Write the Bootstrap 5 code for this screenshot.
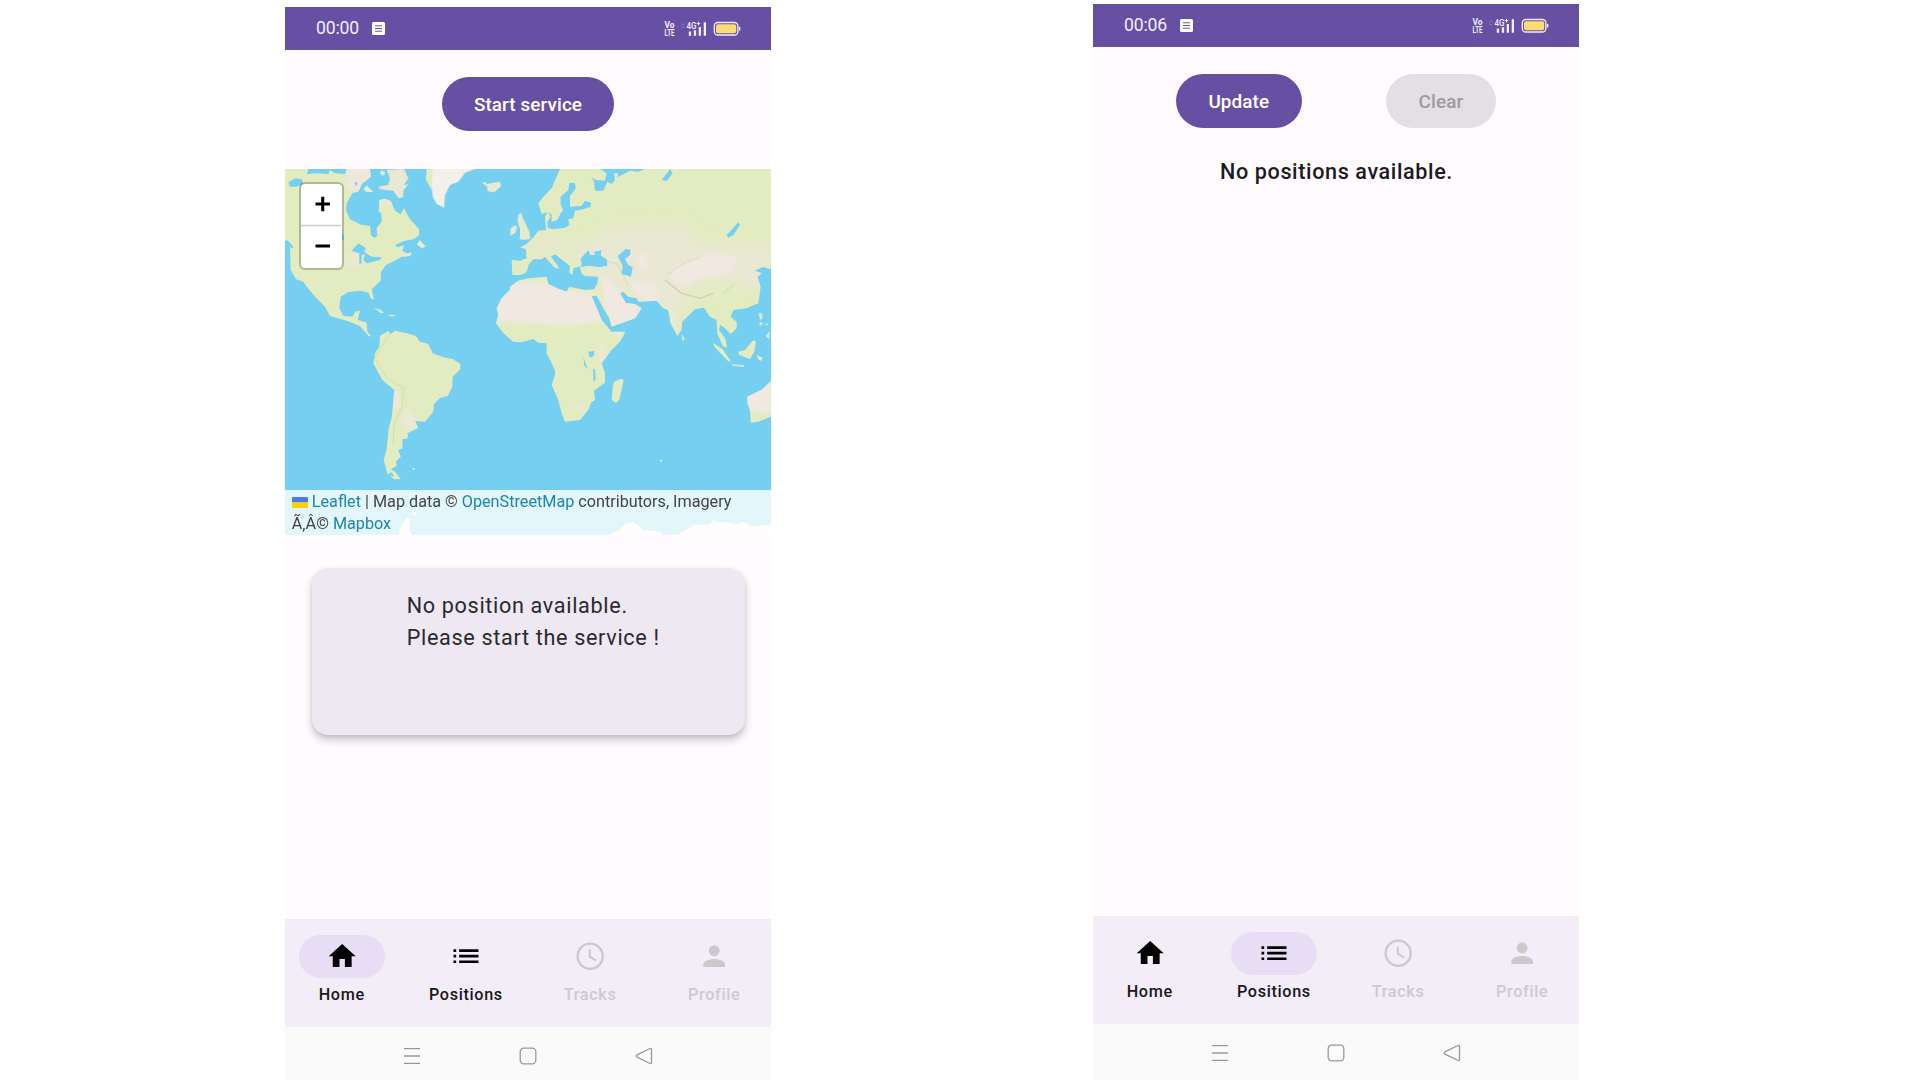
<!DOCTYPE html>
<html lang="en">
<head>
<meta charset="utf-8">
<meta name="viewport" content="width=device-width, initial-scale=1">
<title>Position tracker</title>
<link href="https://cdn.jsdelivr.net/npm/bootstrap@5.3.0/dist/css/bootstrap.min.css" rel="stylesheet">
<style>
body{background:#fff;font-family:Roboto,"Liberation Sans",sans-serif;color:#1c1b1f;height:1080px;overflow:hidden}
.screens{padding-left:285px;gap:322px;height:1080px}
.phone{width:486px;background:#fffbff}
.phone-a{margin-top:7px;height:1073px}
.phone-b{margin-top:4px;height:1076px}
.statusbar{height:43.4px;background:#6750a4;color:#f3eefb;padding:0 30px 0 31px;flex:none}
.clock{font-size:17.6px;line-height:43px;letter-spacing:-.15px}
.note{margin-left:13px}
.m3btn{height:54px;border:0;border-radius:27px;padding:0 32.4px;font-size:18.9px;font-weight:500;letter-spacing:.1px;line-height:56.5px;background:#6750a4;color:#fff}
.m3btn:disabled{background:#e3dfe3;color:#9d9a9f;opacity:1}
.actions-a{padding-top:26.6px;height:118.6px;flex:none}
.actions-b{padding:26.6px 83.4px 0 83px;flex:none}
.mapbox{height:366px;flex:none;overflow:hidden;background:#75cff0}
.zoomctl{left:14px;top:13.500px;width:45px;height:87.5px;border:2.500px solid rgba(0,0,0,.22);border-radius:6px;background:#fff;background-clip:padding-box}
.zoomctl svg{display:block;width:40px;height:82.5px}
.attrib{bottom:0;left:0;right:0;height:45px;background:rgba(255,255,255,.8);font-size:16.2px;line-height:22px;padding:.8px 6.8px 0;color:#444;white-space:nowrap}
.attrib a{color:#1a86ad;text-decoration:none}
.infocard{margin:33px 26.5px 0 26.7px;height:167px;border-radius:16px;background:#ede8f2;box-shadow:0 5px 8px rgba(0,0,0,.22),0 1px 3px rgba(0,0,0,.07);padding:22px 0 0 95px;font-size:21.6px;line-height:32.4px;letter-spacing:.675px;color:#2a292e;flex:none}
.empty-title{font-size:21.6px;font-weight:500;line-height:32.4px;letter-spacing:.61px;margin-top:27.6px;padding-left:1px}
.tabs-m3{height:108px;background:#f2edf6;gap:10.8px;flex:none;padding-top:16.2px}
.tab-m3{width:113.4px;font-size:16.2px;font-weight:500;letter-spacing:.675px;line-height:21.6px;color:#18171b}
.tab-m3.off{color:#cdcacf}
.pill{width:86.4px;height:43.2px;border-radius:22px;margin-bottom:5.9px}
.on .pill{background:#e7def6}
.pill svg{width:32.4px;height:32.4px;margin-top:-1px}
.sysbar{background:#fafafa;height:53px;padding-top:20px;gap:98px;flex:none}
.phone-b .sysbar{height:56px}
.sysbar svg{width:18px;height:18px;fill:none;stroke:#9a9a9a;stroke-width:1.3}
</style>
<script src="https://cdn.jsdelivr.net/npm/bootstrap@5.3.0/dist/js/bootstrap.bundle.min.js"></script>
</head>
<body>
<svg width="0" height="0" class="position-absolute" aria-hidden="true">
<defs>
<symbol id="note" viewBox="0 0 13 13"><rect width="13" height="13" rx="1.5" fill="#fff"/><path d="M3 3.8h7M3 6.5h7M3 9.2h7" stroke="#6750a4" stroke-width="1"/></symbol>
<symbol id="signals" viewBox="0 0 77 16">
<g fill="#f3eefb" font-family="Roboto,sans-serif">
<text x="0.5" y="7.200" font-size="9" font-weight="700" textLength="10" lengthAdjust="spacingAndGlyphs">Vo</text>
<text x="0.5" y="14.800" font-size="9.500" font-weight="700" textLength="10" lengthAdjust="spacingAndGlyphs">LTE</text>
<text x="22.5" y="8" font-size="9.500" font-weight="500" textLength="10" lengthAdjust="spacingAndGlyphs">4G</text>
<path d="M32.700 2.600h3.600M34.500.800v3.600" stroke="#f3eefb" stroke-width="1"/>
<path d="M24.8 10.6h2.3v4.100h-2.3zM29.8 9.300h2.3v5.400h-2.3zM34.7 6h2.3v8.700h-2.3zM39.7 1.2h2.3v13.500h-2.3z"/></g>
<path d="M17.5 4l1.5-1.3 1.5 1.3M17.5 5.800l1.5 1.3 1.5-1.3" stroke="#9380c2" fill="none"/>
<rect x="50.3" y="1.5" width="23.6" height="12.500" rx="3.5" fill="none" stroke="#f3eefb" stroke-width="1.3"/>
<rect x="52" y="3.2" width="20.2" height="9.100" rx="2" fill="#ffdc73"/><path d="M75.6 5.9v3.6" stroke="#f3eefb" stroke-width="1.5"/>
</symbol>
<symbol id="home" viewBox="0 0 24 24"><path d="M10 20v-6h4v6h5v-8h3L12 3 2 12h3v8z"/></symbol>
<symbol id="list" viewBox="0 0 24 24"><path d="M2.6 6.9h2v2h-2zM2.6 11h2v2h-2zM2.6 15.1h2v2h-2zM6.8 6.9h14.300v2H6.8zM6.8 11h14.300v2H6.8zM6.8 15.1h14.300v2H6.8z"/></symbol>
<symbol id="clockicon" viewBox="0 0 24 24"><circle cx="12" cy="12" r="9.3" fill="none" stroke="#cbc9cb" stroke-width="1.7"/><path d="M11.7 7v5.4l4.8 2.9" fill="none" stroke="#cbc9cb" stroke-width="1.5"/></symbol>
<symbol id="person" viewBox="0 0 24 24"><path fill="#cbc9cb" d="M12 12c2.21 0 4-1.79 4-4s-1.79-4-4-4-4 1.79-4 4 1.790 4 4 4zm0 2c-2.670 0-8 1.340-8 4v2h16v-2c0-2.660-5.330-4-8-4z"/></symbol>
<symbol id="menu" viewBox="0 0 18 18"><path d="M1 1.6h16M1 9h16M1 16.400h16"/></symbol>
<symbol id="square" viewBox="0 0 18 18"><rect x="1.200" y="1.200" width="15.600" height="15.600" rx="3.500"/></symbol>
<symbol id="back" viewBox="0 0 18 18"><path d="M15 1.500 2 7.900q-1.600 1.100 0 2.200l13 6.400q1.500.5 1.500-1V2.500q0-1.500-1.500-1z"/></symbol>
</defs>
</svg>
<main class="screens d-flex align-items-start">
<section class="phone phone-a d-flex flex-column">
<header class="statusbar d-flex align-items-center"><span class="clock">00:00</span><svg class="note" width="13" height="13"><use href="#note"/></svg><svg class="ms-auto" width="77" height="16"><use href="#signals"/></svg></header>
<div class="actions-a text-center"><button class="m3btn">Start service</button></div>
<div class="mapbox position-relative">
<svg class="d-block" width="486" height="366" viewBox="15 27 1458 1098">
<defs>
<filter id="soft" x="-30%" y="-30%" width="160%" height="160%"><feGaussianBlur stdDeviation="7"/></filter>
<filter id="wide" x="-30%" y="-30%" width="160%" height="160%"><feGaussianBlur stdDeviation="18"/></filter>
<clipPath id="americas">
<path id="north" d="M15 27H85L80 42 110 40 145 42 150 30 165 40 195 42 200 27H270L273 50 245 72 235 95 218 98 200 130 198 150 210 178 245 195 270 198 273 225 282 234 292 228 290 205 305 185 304 160 296 155 298 120 315 116 332 122 345 152 362 163 372 145 388 175 417 208 418 226 400 238 375 242 345 255 352 262 372 256 367 272 385 282 395 275 390 288 365 290 338 305 318 315 303 335 302 362 275 388 282 420 272 415 266 398 240 392 205 396 182 410 178 445 190 468 218 470 225 455 240 452 233 480 260 488 262 515 275 530 265 527 240 498 205 484 150 468 135 440 105 410 80 380 70 365 48 358 32 330 30 262 15 240Z"/>
<path id="south" d="M300 528 325 512 332 522 345 512 380 520 408 528 420 545 445 552 458 580 490 592 520 598 541 612 541 628 518 650 517 680 503 708 480 714 462 732 460 755 435 785 405 783 415 803 383 820 383 835 367 838 367 865 355 870 362 890 348 905 350 918 332 928 345 935 362 957 342 958 322 940 311 900 320 868 326 805 335 775 343 690 307 660 280 610 285 580 298 560Z"/>
</clipPath>
<clipPath id="eastland">
<path id="afroeurasia" d="M120 27 95 85 70 110 55 130 65 162 85 155 95 165 95 185 112 180 122 160 130 150 122 135 122 110 145 90 148 68 165 70 167 85 150 108 150 140 185 138 195 122 213 128 212 140 190 148 165 152 160 175 145 178 148 195 135 203 100 208 83 203 82 185 92 170 83 153 75 170 78 210 55 212 40 232 20 252 0 262 18 268 20 295 0 302-25 300-23 345 0 345 15 340 22 330 25 315 40 298 65 298 75 290 85 302 103 322 118 328 112 315 92 290 105 283 130 302 150 318 148 338 157 346 160 325 185 318 182 295 205 270 212 285 225 285 222 275 245 270 242 285 262 300 262 318 240 322 205 318 180 322 185 342 195 348 235 350 232 370 222 388 195 390 148 380 140 395 118 388 85 372 80 350 25 355-5 362-30 380-30 390-55 415-70 445-65 465-72 490-50 520-20 545 5 547 40 537 55 548 80 550 80 580 105 630 105 645 95 675 115 720 125 760 135 785 180 780 205 750 213 728 225 720 222 692 255 668 255 640 245 610 275 570 300 545 316 515 275 515 262 500 245 480 215 408 230 408 250 445 268 475 275 500 345 475 365 445 345 432 318 430 300 400 310 395 325 410 350 415 355 425 410 422 430 445 445 450 452 490 472 528 485 510 487 485 525 448 552 443 570 470 590 480 592 520 610 545 620 560 615 535 597 510 600 495 610 500 632 522 650 505 650 485 632 470 640 450 680 445 715 430 722 380 712 350 725 340 703 332 728 320 753 328V27H375L355 35 330 32 305 45 292 52 295 40 282 40 285 60 275 72 262 65 250 92 225 92 222 62 212 50 228 60 255 62 260 40 240 27Z"/>
<path id="australia" d="M753 662 728 688 682 710 682 730 690 750 692 788 715 785 753 770Z"/>
</clipPath>
</defs>
<rect x="15" y="27" width="1458" height="1098" fill="#75cff0"/>
<g fill="#e3ecc0">
<use href="#north"/><use href="#south"/>
<g clip-path="url(#americas)"><g filter="url(#soft)" fill="#eee7db"><ellipse cx="235" cy="50" rx="40" ry="50"/><path d="M185 285 240 275 260 320 200 325Z" opacity=".6"/><path d="M50 330 120 390 145 440 85 365Z" opacity=".5"/><ellipse cx="347" cy="720" rx="10" ry="32" fill="#f0e6e2"/><path d="M370 755 395 750 415 795 385 815 365 780Z" opacity=".8"/><ellipse cx="325" cy="130" rx="45" ry="15" opacity=".5"/></g>
<path d="M330 520 295 575 285 595 320 655 372 685 365 745 342 790 340 850" fill="none" stroke="#cbd1ae" stroke-width="3" opacity=".65"/></g>
<path fill="#f3efe9" d="M440 27 438 55 455 80 458 110 470 132 492 143 495 105 510 75 535 65 555 38 585 27Z"/><path d="M440 27 438 60 455 90 458 27Z"/>
<path fill="#eae9d3" d="M605 67l14 0 1 6 20-5 20-3 3 14-20 18-20-3-2-14zM295 80 325 75 330 55 320 30 372 27 385 55 372 75 385 72 370 92 369 112 355 115 340 92 300 88ZM250 88l10-12 20 20h-20zM300 34h14v12h-10zM410 253l10-13 17 20-12 5zM366 284l24-6 6 6-25 6z"/>
<path d="M278 443l25 6 8 10-8 1-12-10zM325 464l20 1v4h-18z"/>
<path fill="#e6ead0" d="M715 165l7-8 8 20 18 38 2 22-25 3-7-6 11-10-10-20-7-20zM692 205l14-10 5 6-5 18-15 8z"/>
<g transform="translate(720 0)">
<path fill="#e5eacb" d="M0 170 20 208 30 232 0 238Z"/>
<use href="#afroeurasia"/><use href="#australia"/>
<g clip-path="url(#eastland)">
<g filter="url(#wide)" fill="#eae8d5"><path d="M170 255 270 200 500 190 530 240 700 260 753 240V320L700 400 620 390 500 420 440 520 400 440 300 380 240 350 170 320Z" opacity=".85"/><path d="M20 260 80 215 160 240 160 310 80 290Z" opacity=".6"/></g>
<g filter="url(#soft)">
<path fill="#f0e8e1" d="M-85 420-20 365 75 365 150 390 220 400 255 485 220 490 130 497-80 482Z"/>
<path fill="#f0e8e1" d="M240 350 270 350 305 400 370 440 355 480 265 505ZM320 355 420 380 410 430 350 415ZM460 325 560 280 655 288 635 340 540 355 480 385 445 345ZM350 285 375 280 390 330 355 330ZM755 665V755L710 760 680 745V700Z"/>
<path fill="#ebe8d7" d="M435 440 470 460 470 530ZM685 350 715 340 700 395ZM230 570 255 540V650ZM165 735l30-5v30zM100 680l10 35 10 50-30-30zM275 510h40v20h-30z"/>
<path fill="#e3ecc0" d="M485 390 580 350 680 370 690 430 600 440 560 410 500 405Z" opacity=".6"/>
</g>
<path d="M435 360 460 380 485 400 540 415 580 400" fill="none" stroke="#bfc5a5" stroke-width="4" opacity=".65"/><path d="M440 345 490 310 545 290M260 305 290 310 325 375M610 400 645 370" fill="none" stroke="#c7cda8" stroke-width="4" opacity=".35"/></g>
<path d="M305 656l6 5-13 58-10 10-13-9 3-35 3-18 13-8zM486 522l8 16-7 5zM578 548l30 20 26 38-10-3-40-42zM594 510l24 35 2 18-12-5-15-35zM655 575 675 570 700 540 708 545 703 575 690 597 657 585ZM710 585l18 8-2 10-12-5zM636 613l36 3v5l-35-4zM716 460l10 0 2 15-8 5zM718 485l12 5-10 8zM738 528l10-14v25zM736 491h8v4h-8z"/>
<g fill="#75cff0">
<path d="M293 288 318 266 332 270 330 285 315 297 325 315 338 322 333 350 305 342 308 317ZM620 225 655 187 660 195 640 225 625 233ZM425 60 450 27 458 40 440 63ZM205 575l18-2-2 15-12 5zM190 590l5 15 8 22-10-10zM219 628h6l2 30-6 7z"/>
</g>
</g>
<g fill="#75cff0"><path d="M25 67 45 55 65 57 70 72 50 80 30 80ZM215 272 235 250 258 265 252 276 275 290 305 292 300 300 260 310 250 300 255 282 245 285 245 310 238 312 238 280ZM185 222h5v18h-5zM224 65l9 3-5 12zM326 945l5-10 10 10-2 5z"/><path d="M15 243l8-2 17 20-4 5zM73 385l8 3 14 28 12 12 2 8-9-7-15-23z"/></g>
<path fill="#fcf9f5" d="M398 925h6v4h-6zM1140 900h6v4h-6zM355 1125 360 1105 380 1070 390 1080 388 1110 395 1125ZM393 1060l15-4 3 5-10 4zM985 1125 1020 1108 1035 1092 1060 1085 1078 1100 1090 1110 1140 1115 1150 1125ZM1195 1125 1240 1095 1292 1093 1298 1078 1310 1085 1350 1088 1370 1095 1390 1085 1415 1100 1473 1093V1125Z"/>
</g>
</svg>
<div class="zoomctl position-absolute"><svg viewBox="0 0 40 82.5"><path d="M14.500 20h14.500M21.700 12.800v14.500M14.500 62h14.500" stroke="#000" stroke-width="3"/><path d="M0 41.500h40" stroke="#ccc" stroke-width="1.500"/></svg></div>
<div class="attrib position-absolute"><svg width="16" height="11" viewBox="0 0 16 11"><path fill="#4c7be1" d="M0 0h16v5.500H0z"/><path fill="#ffd500" d="M0 5.500h16V11H0z"/></svg> <a href="#">Leaflet</a> | Map data © <a href="#">OpenStreetMap</a> contributors, Imagery<br>Ã‚Â© <a href="#">Mapbox</a></div>
</div>
<div class="infocard">No position available.<br>Please start the service !</div>
<nav class="tabs-m3 d-flex mt-auto text-center">
<div class="tab-m3 on d-flex flex-column align-items-center"><span class="pill d-flex align-items-center justify-content-center"><svg><use href="#home"/></svg></span>Home</div>
<div class="tab-m3 d-flex flex-column align-items-center"><span class="pill d-flex align-items-center justify-content-center"><svg><use href="#list"/></svg></span>Positions</div>
<div class="tab-m3 off d-flex flex-column align-items-center"><span class="pill d-flex align-items-center justify-content-center"><svg><use href="#clockicon"/></svg></span>Tracks</div>
<div class="tab-m3 off d-flex flex-column align-items-center"><span class="pill d-flex align-items-center justify-content-center"><svg><use href="#person"/></svg></span>Profile</div>
</nav>
<footer class="sysbar d-flex justify-content-center"><svg><use href="#menu"/></svg><svg><use href="#square"/></svg><svg><use href="#back"/></svg></footer>
</section>
<section class="phone phone-b d-flex flex-column">
<header class="statusbar d-flex align-items-center"><span class="clock">00:06</span><svg class="note" width="13" height="13"><use href="#note"/></svg><svg class="ms-auto" width="77" height="16"><use href="#signals"/></svg></header>
<div class="actions-b d-flex justify-content-between"><button class="m3btn">Update</button><button class="m3btn" disabled>Clear</button></div>
<div class="empty-title text-center">No positions available.</div>
<nav class="tabs-m3 d-flex mt-auto text-center">
<div class="tab-m3 d-flex flex-column align-items-center"><span class="pill d-flex align-items-center justify-content-center"><svg><use href="#home"/></svg></span>Home</div>
<div class="tab-m3 on d-flex flex-column align-items-center"><span class="pill d-flex align-items-center justify-content-center"><svg><use href="#list"/></svg></span>Positions</div>
<div class="tab-m3 off d-flex flex-column align-items-center"><span class="pill d-flex align-items-center justify-content-center"><svg><use href="#clockicon"/></svg></span>Tracks</div>
<div class="tab-m3 off d-flex flex-column align-items-center"><span class="pill d-flex align-items-center justify-content-center"><svg><use href="#person"/></svg></span>Profile</div>
</nav>
<footer class="sysbar d-flex justify-content-center"><svg><use href="#menu"/></svg><svg><use href="#square"/></svg><svg><use href="#back"/></svg></footer>
</section>
</main>
</body>
</html>
